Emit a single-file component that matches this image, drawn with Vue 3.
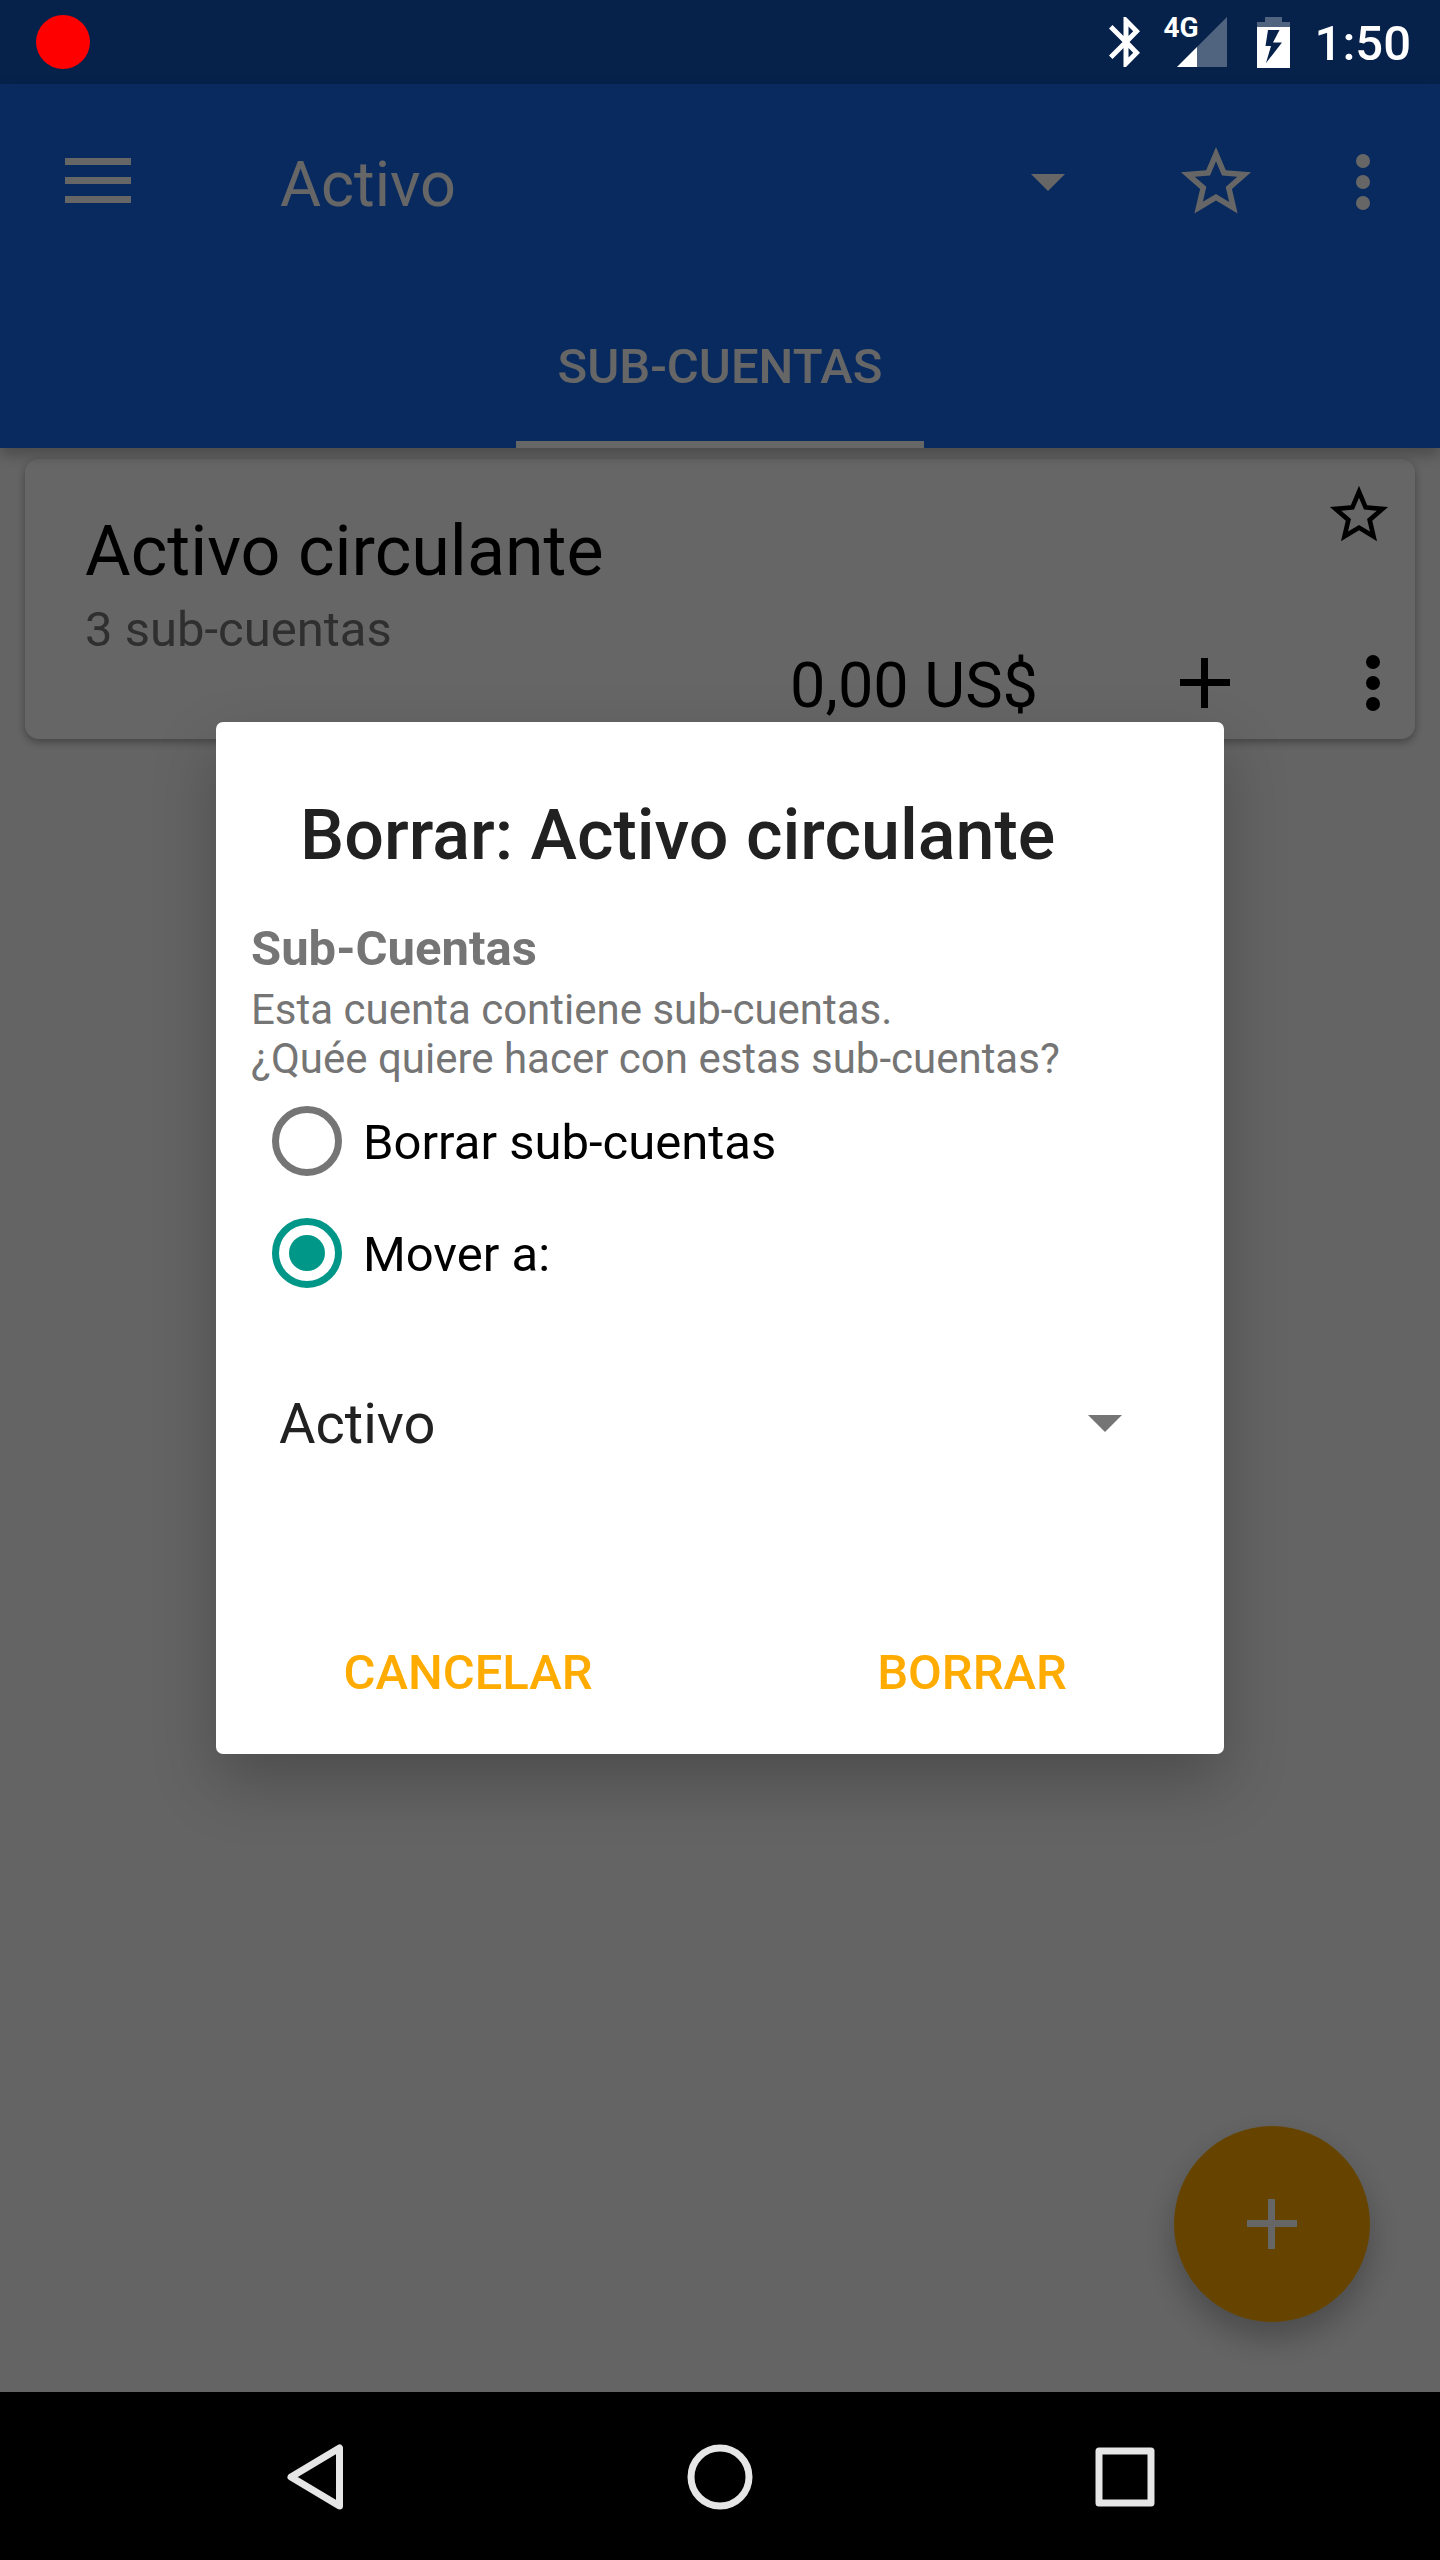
<script setup>
import { ref } from 'vue'

const account = ref('Activo')
const target = ref('Activo')
const action = ref('move')

const starPath =
  'M22 9.24l-7.19-.62L12 2 9.19 8.63 2 9.24l5.46 4.73L5.82 21 12 17.27 18.18 21l-1.63-7.03L22 9.24zM12 15.4l-3.76 2.27 1-4.28-3.32-2.88 4.38-.38L12 6.1l1.71 4.04 4.38.38-3.32 2.88 1 4.28L12 15.4z'
</script>

<template>
  <div class="screen">
    <div class="status">
      <span class="record"></span>
      <div class="indicators">
        <svg class="bluetooth" width="32" height="50" viewBox="0 0 32 50" aria-hidden="true">
          <path
            fill="#fff"
            fill-rule="evenodd"
            d="M14.500 0H17L31 14.300 20.500 25 31 35.700 17 50H14.500V31L3.500 42 0 38.500 13.500 25 0 11.500 3.500 8 14.500 19ZM19.500 9.500V19L24.200 14.300ZM19.500 31V40.500L24.200 35.700Z"
          />
        </svg>
        <div class="signal">
          <span class="network">4G</span>
          <svg width="50" height="50" viewBox="0 0 50 50" aria-hidden="true">
            <path fill="#51647f" d="M50 0V50H0Z" />
            <path fill="#fff" d="M20 30V50H0Z" />
          </svg>
        </div>
        <svg width="33" height="51" viewBox="0 0 33 51" aria-hidden="true">
          <path fill="#51647f" d="M8 0H25V5H33V10H0V5H8Z" />
          <path fill="#fff" fill-rule="evenodd" d="M0 10H33V51H0ZM11 13L8.500 29H14L9 46 25 25.500H16L22.500 13Z" />
        </svg>
        <span class="clock">1:50</span>
      </div>
    </div>

    <div class="stage">
      <header class="appbar">
        <div class="toolbar">
          <button class="icon-btn menu" aria-label="Menú">
            <svg width="66" height="45" viewBox="0 0 66 45"><path fill="#fff" d="M0 0H66V7H0ZM0 19H66V26H0ZM0 38H66V45H0Z" /></svg>
          </button>
          <div class="picker account-picker">
            <select v-model="account" aria-label="Cuenta">
              <option>Activo</option>
            </select>
            <svg width="34" height="17" viewBox="0 0 34 17"><path fill="currentColor" d="M0 0H34L17 17Z" /></svg>
          </div>
          <button class="icon-btn" aria-label="Favorito">
            <svg width="84" height="84" viewBox="0 0 24 24"><path fill="#fff" :d="starPath" /></svg>
          </button>
          <button class="icon-btn more" aria-label="Más opciones">
            <svg width="14" height="56" viewBox="0 0 14 56">
              <g fill="#fff"><circle cx="7" cy="7" r="7" /><circle cx="7" cy="28" r="7" /><circle cx="7" cy="49" r="7" /></g>
            </svg>
          </button>
        </div>
        <nav class="tabs">
          <button class="tab">SUB-CUENTAS</button>
        </nav>
      </header>

      <main class="list">
        <article class="card">
          <div class="card-text">
            <h2>Activo circulante</h2>
            <p>3 sub-cuentas</p>
          </div>
          <div class="card-side">
            <button class="icon-btn card-star" aria-label="Favorito">
              <svg width="70" height="70" viewBox="0 0 24 24"><path fill="#000" :d="starPath" /></svg>
            </button>
            <div class="card-actions">
              <span class="amount">0,00 US$</span>
              <button class="icon-btn" aria-label="Añadir">
                <svg width="50" height="50" viewBox="0 0 50 50"><path fill="#000" d="M21 0H28V21H50V28H28V50H21V28H0V21H21Z" /></svg>
              </button>
              <button class="icon-btn" aria-label="Más opciones">
                <svg width="14" height="56" viewBox="0 0 14 56">
                  <g fill="#000"><circle cx="7" cy="7" r="7" /><circle cx="7" cy="28" r="7" /><circle cx="7" cy="49" r="7" /></g>
                </svg>
              </button>
            </div>
          </div>
        </article>
      </main>

      <button class="fab" aria-label="Nueva cuenta">
        <svg width="50" height="50" viewBox="0 0 50 50"><path fill="#fff" d="M21 0H28V21H50V28H28V50H21V28H0V21H21Z" /></svg>
      </button>

      <div class="scrim">
        <form class="dialog" role="dialog" aria-labelledby="dialog-title" @submit.prevent>
          <h1 id="dialog-title">Borrar: Activo circulante</h1>
          <div class="body">
            <h3>Sub-Cuentas</h3>
            <p>Esta cuenta contiene sub-cuentas.<br />¿Quée quiere hacer con estas sub-cuentas?</p>
          </div>
          <div class="choices">
            <label><input v-model="action" type="radio" name="action" value="delete" /><span>Borrar sub-cuentas</span></label>
            <label><input v-model="action" type="radio" name="action" value="move" /><span>Mover a:</span></label>
          </div>
          <div class="picker target-picker">
            <select v-model="target" aria-label="Mover a">
              <option>Activo</option>
            </select>
            <svg width="34" height="17" viewBox="0 0 34 17"><path fill="currentColor" d="M0 0H34L17 17Z" /></svg>
          </div>
          <div class="buttons">
            <button type="button">CANCELAR</button>
            <button type="submit">BORRAR</button>
          </div>
        </form>
      </div>
    </div>

    <nav class="system-nav">
      <button class="icon-btn" aria-label="Atrás">
        <svg width="58" height="68" viewBox="0 0 58 68">
          <path fill="none" stroke="#e6e6e6" stroke-width="7" stroke-linejoin="round" d="M53.500 5V63L5 34Z" />
        </svg>
      </button>
      <button class="icon-btn" aria-label="Inicio">
        <svg width="66" height="66" viewBox="0 0 66 66"><circle cx="33" cy="33" r="29" fill="none" stroke="#e6e6e6" stroke-width="7" /></svg>
      </button>
      <button class="icon-btn" aria-label="Recientes">
        <svg width="60" height="60" viewBox="0 0 60 60">
          <rect x="4" y="4" width="52" height="52" fill="none" stroke="#e6e6e6" stroke-width="7" stroke-linejoin="round" />
        </svg>
      </button>
    </nav>
  </div>
</template>

<style>
body {
  margin: 0;
  background: #000;
}
</style>

<style scoped>
.screen {
  display: flex;
  flex-direction: column;
  min-height: 100vh;
  font-family: Roboto, "Liberation Sans", sans-serif;
  font-size: 49px;
  line-height: 58px;
  color: #000;
}
svg {
  display: block;
}
h1,
h2,
h3,
p {
  margin: 0;
}
button,
select {
  margin: 0;
  padding: 0;
  border: 0;
  background: none;
  font: inherit;
  color: inherit;
}
.icon-btn {
  display: flex;
  align-items: center;
  justify-content: center;
  width: 84px;
  height: 84px;
  flex: none;
}

/* Status bar */
.status {
  display: flex;
  align-items: center;
  justify-content: space-between;
  height: 84px;
  padding: 0 29px 0 36px;
  background: #06224b;
  color: #fff;
}
.record {
  width: 54px;
  height: 54px;
  border-radius: 50%;
  background: #f00;
}
.indicators {
  display: flex;
  align-items: center;
}
.signal {
  position: relative;
  margin: 0 30px 0 36px;
}
.network {
  position: absolute;
  top: -3px;
  left: -13px;
  font-size: 28px;
  line-height: 28px;
  font-weight: 700;
}
.clock {
  margin-left: 25px;
  padding-top: 4px;
  font-weight: 500;
}

/* App content */
.stage {
  position: relative;
  display: flex;
  flex-direction: column;
  flex: 1;
  background: #fafafa;
}
.appbar {
  position: relative;
  z-index: 1;
  background: #1469eb;
  color: #fff;
  box-shadow: 0 7px 14px rgba(0, 0, 0, 0.26);
}
.toolbar {
  display: flex;
  align-items: center;
  height: 196px;
  padding: 0 35px 0 56px;
}
.toolbar .menu {
  margin-right: 140px;
  padding-bottom: 4px;
}
.toolbar .more {
  margin-left: 63px;
}
.picker {
  display: grid;
  grid-template-columns: 1fr auto;
  align-items: center;
}
.picker select {
  grid-area: 1 / 1 / 2 / 3;
  appearance: none;
  width: 100%;
  height: 84px;
}
.picker svg {
  grid-area: 1 / 2 / 2 / 3;
  pointer-events: none;
}
.account-picker {
  flex: 1;
  margin-right: 109px;
  font-size: 63px;
}
.account-picker select {
  padding-top: 6px;
}
.tabs {
  display: flex;
  justify-content: center;
  height: 168px;
}
.tab {
  padding: 12px 42px 0;
  border-bottom: 7px solid #fff;
  font-weight: 500;
}
.list {
  flex: 1;
  padding: 11px 25px;
}
.card {
  display: flex;
  justify-content: space-between;
  min-height: 280px;
  border-radius: 14px;
  background: #fff;
  box-shadow: 0 3px 8px rgba(0, 0, 0, 0.34);
}
.card-text {
  padding: 51px 0 0 60px;
}
.card-text h2 {
  margin-bottom: 9px;
  font-size: 70px;
  line-height: 82px;
  font-weight: 400;
}
.card-text p {
  color: #757575;
}
.card-side {
  display: flex;
  flex-direction: column;
  align-items: flex-end;
  justify-content: space-between;
  padding: 14px 0;
}
.card-star {
  margin-right: 14px;
}
.card-actions {
  display: flex;
  align-items: center;
  gap: 84px;
}
.amount {
  padding: 6px 41px 0 0;
  font-size: 63px;
}
.fab {
  position: absolute;
  right: 70px;
  bottom: 70px;
  display: grid;
  place-items: center;
  width: 196px;
  height: 196px;
  border-radius: 50%;
  background: #ffab00;
  box-shadow: 0 16px 32px rgba(0, 0, 0, 0.26);
}

/* Modal dialog */
.scrim {
  position: absolute;
  inset: 0;
  z-index: 2;
  display: grid;
  place-items: center;
  background: rgba(0, 0, 0, 0.6);
}
.dialog {
  width: 70%;
  border-radius: 7px;
  background: #fff;
  box-shadow: 0 28px 64px rgba(0, 0, 0, 0.24);
}
.dialog h1 {
  padding: 72px 84px 44px;
  font-size: 70px;
  line-height: 82px;
  font-weight: 500;
  color: #212121;
}
.body {
  padding: 0 35px;
  color: #757575;
}
.body h3 {
  margin-bottom: 7px;
  font-size: 49px;
  font-weight: 700;
}
.body p {
  font-size: 42px;
  line-height: 49px;
}
.choices {
  padding: 2px 56px 72px;
}
.choices label {
  display: flex;
  align-items: center;
  gap: 21px;
  height: 112px;
}
.choices span {
  padding-top: 4px;
}
.choices input {
  appearance: none;
  display: grid;
  place-items: center;
  width: 70px;
  height: 70px;
  margin: 0;
  border: 7px solid #757575;
  border-radius: 50%;
}
.choices input:checked {
  border-color: #009688;
}
.choices input:checked::before {
  content: "";
  width: 36px;
  height: 36px;
  border-radius: 50%;
  background: #009688;
}
.target-picker {
  padding: 0 102px 0 63px;
  font-size: 56px;
  color: #757575;
}
.target-picker select {
  padding-top: 2px;
  color: #212121;
}
.buttons {
  display: flex;
  margin-top: 125px;
}
.buttons button {
  flex: 1;
  height: 164px;
  padding-top: 2px;
  font-weight: 500;
  color: #ffab00;
}

/* System navigation */
.system-nav {
  display: flex;
  align-items: center;
  height: 168px;
  padding: 0 112px;
  background: #000;
}
.system-nav .icon-btn {
  flex: 1;
  padding-top: 2px;
}
</style>
